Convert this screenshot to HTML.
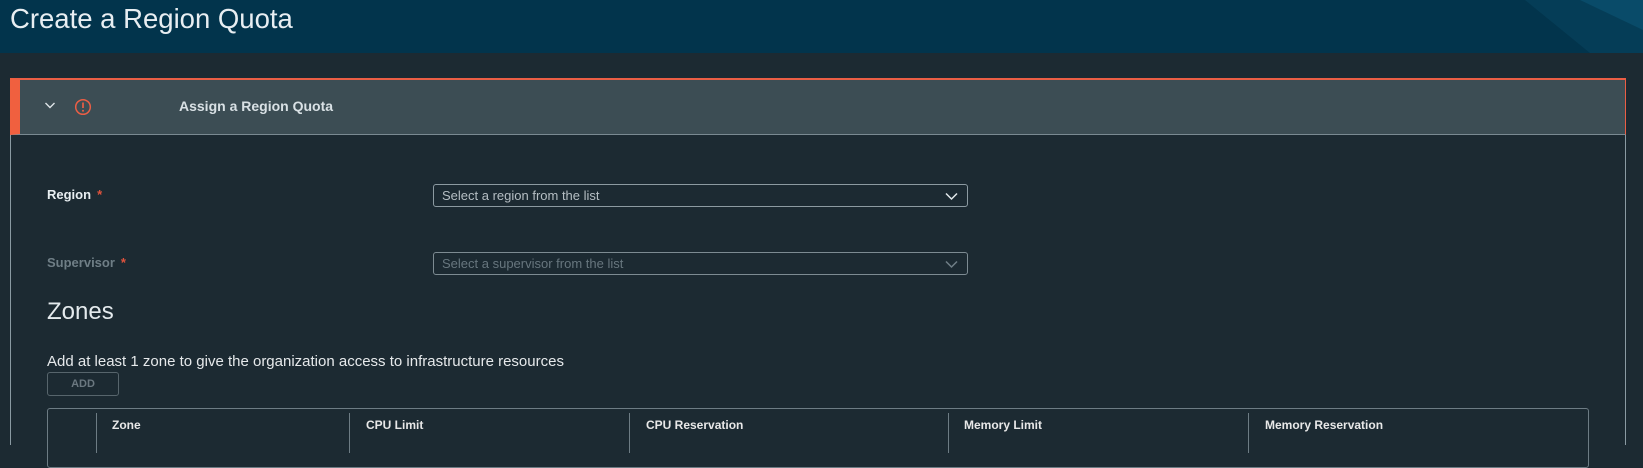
<!DOCTYPE html>
<html><head><meta charset="utf-8"><style>
*{margin:0;padding:0;box-sizing:border-box}
body{width:1643px;height:438px;overflow:hidden;background:#1c2a32;font-family:"Liberation Sans",sans-serif;position:relative;color:#e6e6e6}
.hdr{position:absolute;left:0;top:0;width:1643px;height:53px;background:#02344c;overflow:hidden}
.hdr .t{position:absolute;left:10px;top:3px;font-size:27.5px;color:#e8eef2}
.cardh{position:absolute;left:10px;top:78px;width:1616px;height:57px;background:#3c4d54;border-left:10px solid #f0603f;border-top:2px solid #ea5e45;border-right:1px solid #ea5e45;border-bottom:1px solid #7a8a92}
.body{position:absolute;left:10px;top:135px;width:1616px;height:310px;border-left:1px solid #8a9aa2;border-right:1px solid #8a9aa2}
.lab{position:absolute;font-size:13px;font-weight:bold}
.sel{position:absolute;left:433px;width:535px;height:23px;border:1px solid #8c9aa1;border-radius:3px;font-size:13px;padding:3px 8px}
.star{color:#e0533d;margin-left:6px}
.th{position:absolute;top:418px;font-size:12px;font-weight:bold;color:#e8e8e8}
.sep{position:absolute;top:413px;width:1px;height:40px;background:#6d7c84}
</style></head><body>
<div class="hdr"><div class="t">Create a Region Quota</div>
<svg style="position:absolute;left:1480px;top:0" width="163" height="53"><polygon points="45,0 163,0 163,53 110,53" fill="#06405a" opacity=".8"/><polygon points="100,0 163,0 163,30" fill="#0b5575" opacity=".6"/></svg></div>
<div class="cardh"></div>
<div class="body"></div>
<svg style="position:absolute;left:44px;top:100px" width="12" height="10"><path d="M1.5 3 L6 7.5 L10.5 3" stroke="#dfe5e8" stroke-width="1.4" fill="none"/></svg>
<svg style="position:absolute;left:74px;top:98px" width="18" height="18"><circle cx="9" cy="9" r="7.3" stroke="#ea5e45" stroke-width="1.5" fill="none"/><path d="M9 4.5V10" stroke="#ea5e45" stroke-width="1.7"/><circle cx="9" cy="12.8" r="1" fill="#ea5e45"/></svg>
<div style="position:absolute;left:179px;top:98px;font-size:14px;font-weight:bold;color:#d9e1e5">Assign a Region Quota</div>
<div class="lab" style="left:47px;top:187px;color:#e8eef1">Region<span class="star">*</span></div>
<div class="sel" style="top:184px;color:#b5bec3">Select a region from the list
<svg style="position:absolute;right:9px;top:7px" width="13" height="9"><path d="M1 1.5 L6.5 7 L12 1.5" stroke="#e2e8eb" stroke-width="1.5" fill="none"/></svg></div>
<div class="lab" style="left:47px;top:255px;color:#6f7e86">Supervisor<span class="star">*</span></div>
<div class="sel" style="top:252px;color:#67767e;border-color:#7d8b92">Select a supervisor from the list
<svg style="position:absolute;right:9px;top:7px" width="13" height="9"><path d="M1 1.5 L6.5 7 L12 1.5" stroke="#6f7e86" stroke-width="1.5" fill="none"/></svg></div>
<div style="position:absolute;left:47px;top:298px;font-size:24px;color:#e4eaed">Zones</div>
<div style="position:absolute;left:47px;top:353px;font-size:15px;color:#e6e9eb">Add at least 1 zone to give the organization access to infrastructure resources</div>
<div style="position:absolute;left:47px;top:372px;width:72px;height:24px;border:1px solid #57656c;border-radius:3px;font-size:11px;font-weight:bold;color:#6b7880;text-align:center;line-height:22px">ADD</div>
<div style="position:absolute;left:47px;top:408px;width:1542px;height:60px;border:1px solid #6d7c84;border-radius:3px"></div>
<div class="sep" style="left:96px"></div><div class="sep" style="left:349px"></div><div class="sep" style="left:629px"></div><div class="sep" style="left:948px"></div><div class="sep" style="left:1248px"></div>
<div class="th" style="left:112px">Zone</div><div class="th" style="left:366px">CPU Limit</div><div class="th" style="left:646px">CPU Reservation</div><div class="th" style="left:964px">Memory Limit</div><div class="th" style="left:1265px">Memory Reservation</div>
</body></html>
